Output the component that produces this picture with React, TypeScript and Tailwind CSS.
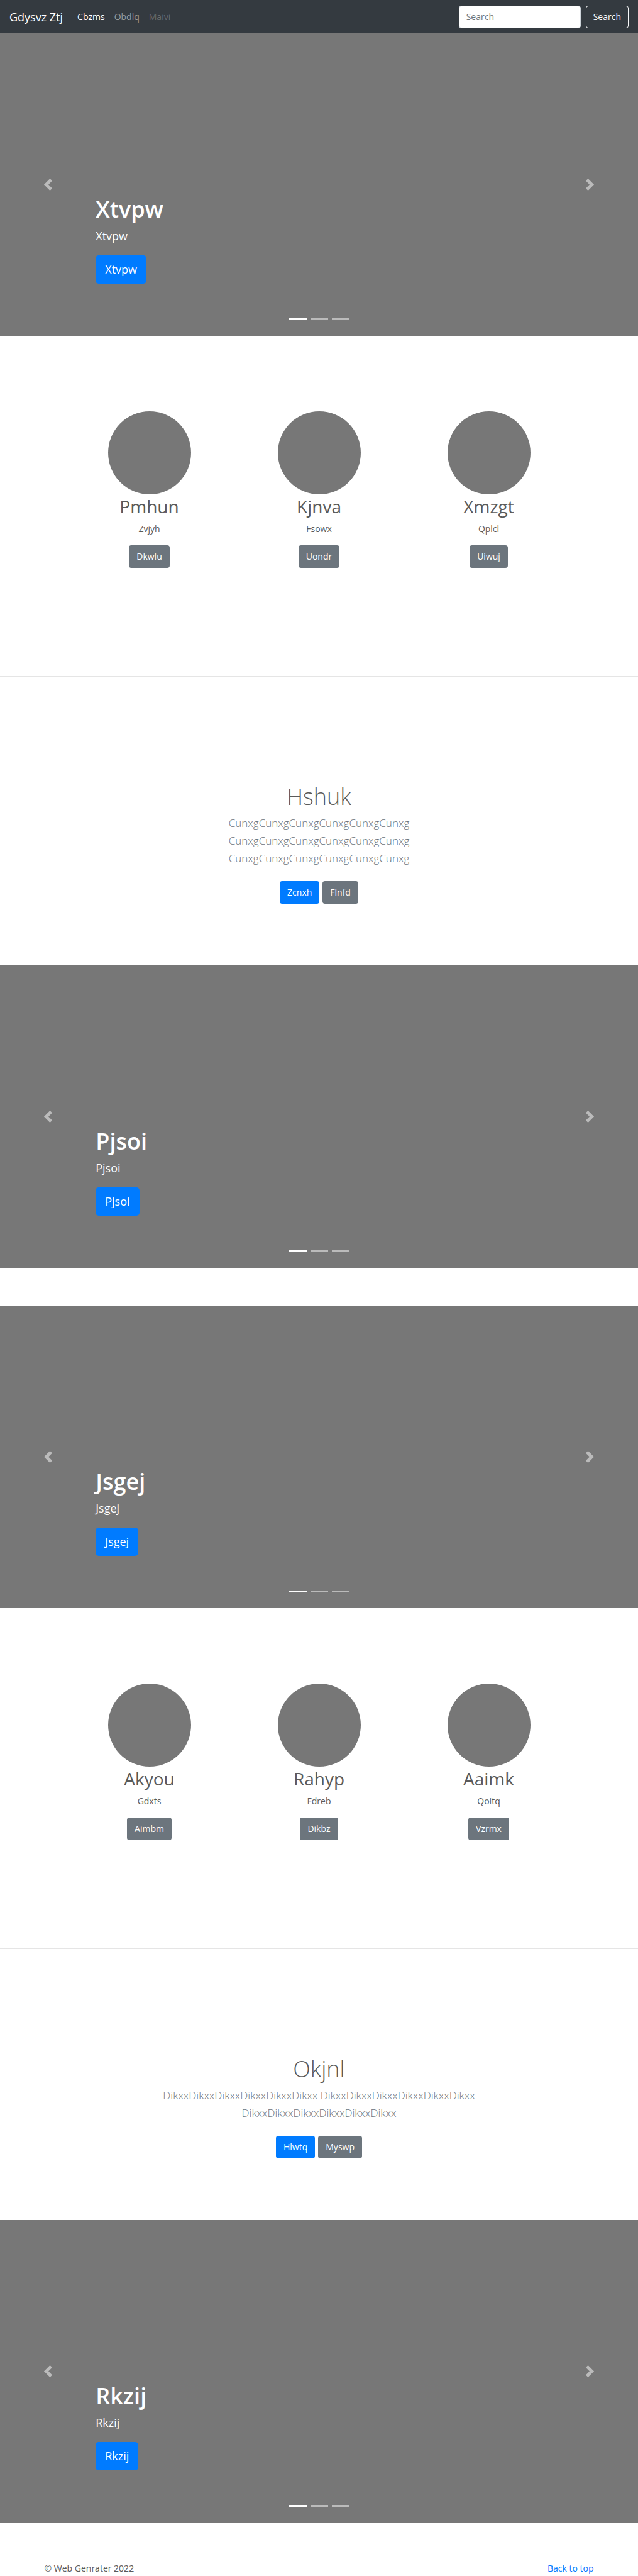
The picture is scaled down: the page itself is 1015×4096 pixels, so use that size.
import React from "react";

function Chevron({ flip = false }: { flip?: boolean }) {
  return (
    <svg viewBox="0 0 8 8" className="size-[19px] fill-white" aria-hidden="true">
      <path
        d={
          flip
            ? "M2.75 0l-1.5 1.5 2.5 2.5-2.5 2.5 1.5 1.5 4-4-4-4z"
            : "M5.25 0l-4 4 4 4 1.5-1.5-2.5-2.5 2.5-2.5-1.5-1.5z"
        }
      />
    </svg>
  );
}

function Navbar() {
  return (
    <header className="flex h-[53px] items-center bg-[#343a40] px-[15px]">
      <a href="#" className="mr-[23px] text-[18px] leading-7 text-white">
        Gdysvz Ztj
      </a>
      <nav className="flex flex-1 gap-[15px]">
        <a href="#" className="text-white">Cbzms</a>
        <a href="#" className="text-white/50">Obdlq</a>
        <a href="#" className="text-white/25">Maivi</a>
      </nav>
      <form className="flex gap-2" onSubmit={(e) => e.preventDefault()}>
        <input
          type="text"
          placeholder="Search"
          aria-label="Search"
          className="h-9 w-[194px] rounded border border-[#ced4da] bg-white px-[11px] text-[#495057] placeholder:text-[#6c757d]"
        />
        <button type="submit" className="h-9 rounded border border-[#f8f9fa] px-[11px] text-[#f8f9fa]">
          Search
        </button>
      </form>
    </header>
  );
}

function Carousel({ title }: { title: string }) {
  return (
    <section className="relative flex h-[481px] flex-col items-start justify-end bg-[#777] px-[15%] pb-[83px] text-white">
      <h1 className="mb-1.5 text-[36px] leading-[45px] font-semibold">{title}</h1>
      <p className="mb-[17px] text-[18px] leading-7">{title}</p>
      <a href="#" className="rounded-[5px] bg-[#007bff] px-[15px] text-[18px] leading-[45px]">
        {title}
      </a>
      <button
        type="button"
        aria-label="Previous"
        className="absolute inset-y-0 left-0 flex w-[15%] items-center justify-center opacity-50"
      >
        <Chevron />
      </button>
      <button
        type="button"
        aria-label="Next"
        className="absolute inset-y-0 right-0 flex w-[15%] items-center justify-center opacity-50"
      >
        <Chevron flip />
      </button>
      <div className="absolute inset-x-0 bottom-[25px] flex justify-center gap-[6px]">
        <button type="button" aria-label="Slide 1" className="h-[3px] w-7 bg-white" />
        <button type="button" aria-label="Slide 2" className="h-[3px] w-7 bg-white/50" />
        <button type="button" aria-label="Slide 3" className="h-[3px] w-7 bg-white/50" />
      </div>
    </section>
  );
}

type Feature = { title: string; text: string; action: string };

function Features({ items }: { items: Feature[] }) {
  return (
    <section className="mx-auto grid max-w-[810px] grid-cols-3 pt-[120px] pb-[172px]">
      {items.map((item) => (
        <div key={item.title} className="flex flex-col items-center">
          <div className="size-[132px] rounded-full bg-[#777]" />
          <h2 className="mb-1.5 text-[28px] leading-[38px]">{item.title}</h2>
          <p className="mb-[15px]">{item.text}</p>
          <a href="#" className="rounded bg-[#6c757d] px-3 leading-9 text-white">
            {item.action}
          </a>
        </div>
      ))}
    </section>
  );
}

type IntroProps = { title: string; text: string; primary: string; secondary: string };

function Intro({ title, text, primary, secondary }: IntroProps) {
  return (
    <section className="border-t border-[#e5e5e5] pt-[168px] pb-[98px] text-center">
      <h1 className="mb-1.5 text-[36px] leading-[45px] font-light">{title}</h1>
      <p className="mx-auto mb-[22px] max-w-[573px] text-[17px] leading-7 font-light text-[#6c757d]">{text}</p>
      <div className="flex justify-center gap-[5px] leading-9 text-white">
        <a href="#" className="rounded bg-[#007bff] px-3">{primary}</a>
        <a href="#" className="rounded bg-[#6c757d] px-3">{secondary}</a>
      </div>
    </section>
  );
}

const topFeatures: Feature[] = [
  { title: "Pmhun", text: "Zvjyh", action: "Dkwlu" },
  { title: "Kjnva", text: "Fsowx", action: "Uondr" },
  { title: "Xmzgt", text: "Qplcl", action: "Uiwuj" },
];

const bottomFeatures: Feature[] = [
  { title: "Akyou", text: "Gdxts", action: "Aimbm" },
  { title: "Rahyp", text: "Fdreb", action: "Dikbz" },
  { title: "Aaimk", text: "Qoitq", action: "Vzrmx" },
];

export default function App() {
  return (
    <div className="bg-white font-['Open_Sans','Noto_Sans',sans-serif] text-[14px] leading-[22px] text-[#5a5a5a]">
      <Navbar />
      <main>
        <Carousel title="Xtvpw" />
        <Features items={topFeatures} />
        <Intro
          title="Hshuk"
          text="CunxgCunxgCunxgCunxgCunxgCunxg CunxgCunxgCunxgCunxgCunxgCunxg CunxgCunxgCunxgCunxgCunxgCunxg"
          primary="Zcnxh"
          secondary="Flnfd"
        />
        <Carousel title="Pjsoi" />
        <div className="h-[60px]" />
        <Carousel title="Jsgej" />
        <Features items={bottomFeatures} />
        <Intro
          title="Okjnl"
          text="DikxxDikxxDikxxDikxxDikxxDikxx DikxxDikxxDikxxDikxxDikxxDikxx DikxxDikxxDikxxDikxxDikxxDikxx"
          primary="Hlwtq"
          secondary="Myswp"
        />
        <Carousel title="Rkzij" />
      </main>
      <footer className="mx-auto flex max-w-[902px] justify-between px-[14px] pt-[62px]">
        <p>© Web Genrater 2022</p>
        <a href="#" className="text-[#007bff]">Back to top</a>
      </footer>
    </div>
  );
}
